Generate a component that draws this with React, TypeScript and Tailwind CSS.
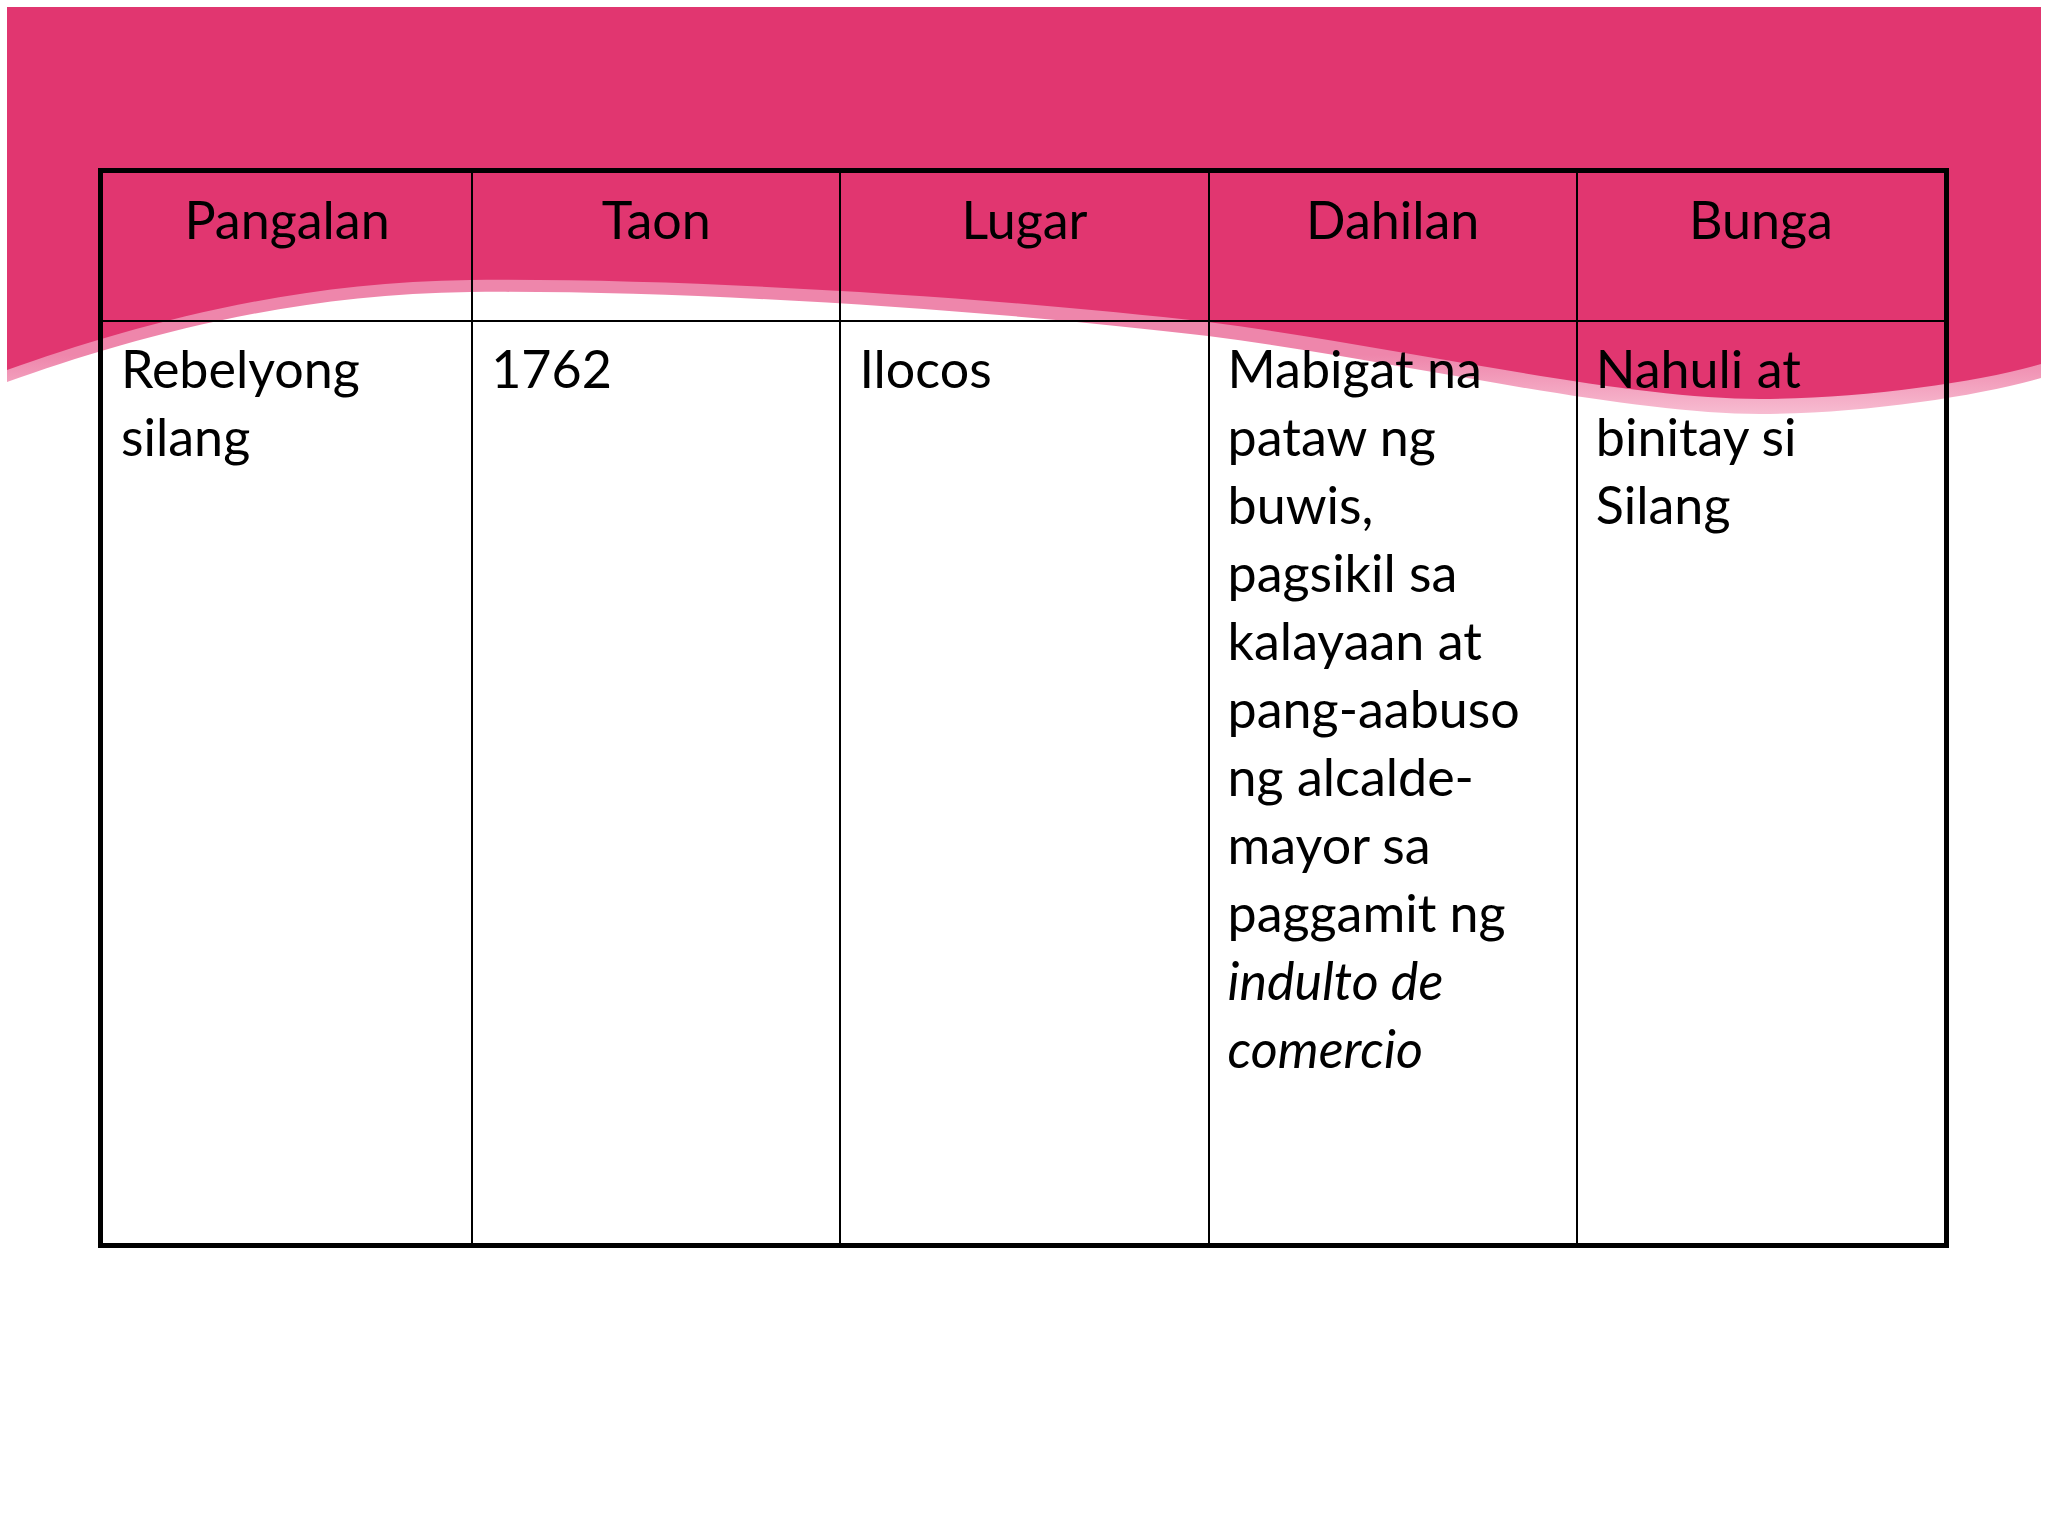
import React from "react";

const headers = ["Pangalan", "Taon", "Lugar", "Dahilan", "Bunga"];

const dahilan = [
  "Mabigat na",
  "pataw ng",
  "buwis,",
  "pagsikil sa",
  "kalayaan at",
  "pang-aabuso",
  "ng alcalde-",
  "mayor sa",
  "paggamit ng",
];

function Wave() {
  return (
    <svg className="absolute inset-0" width="2048" height="1536" viewBox="0 0 2048 1536">
      <defs>
        <linearGradient id="strip" x1="0" y1="0" x2="0" y2="1">
          <stop offset="0.85" stopColor="#ee86ab" />
          <stop offset="1" stopColor="#f7bcd1" />
        </linearGradient>
      </defs>
      <path
        d="M7,20 L2041,20 L2041,378 C1980,396 1860,414 1760,414 C1620,414 1400,361 1208,336 C1000,311 700,290 470,292 C280,294 120,342 7,382 Z"
        fill="url(#strip)"
      />
      <path
        d="M7,7 L2041,7 L2041,364 C1980,382 1860,399 1760,399 C1620,399 1400,347 1208,322 C1000,298 700,278 470,280 C280,282 120,330 7,370 Z"
        fill="#e13670"
      />
    </svg>
  );
}

export default function App() {
  return (
    <div className="relative w-[2048px] h-[1536px] overflow-hidden bg-white font-['Lato','Liberation_Sans',sans-serif] text-black">
      <Wave />
      <div className="relative pt-[168px] pl-[98px]">
        <div className="grid h-[1080px] w-[1851px] grid-cols-5 grid-rows-[149px_1fr] border-[5px] border-black text-[52px] leading-[68px]">
          {headers.map((h, i) => (
            <div
              key={h}
              className={`border-b-2 border-black pt-[12px] text-center ${i > 0 ? "border-l-2" : ""}`}
            >
              {h}
            </div>
          ))}

          <div className="px-[18px] pt-[12px]">
            Rebelyong
            <br />
            silang
          </div>
          <div className="border-l-2 border-black px-[18px] pt-[12px]">1762</div>
          <div className="border-l-2 border-black px-[18px] pt-[12px]">Ilocos</div>
          <div className="border-l-2 border-black px-[18px] pt-[12px]">
            {dahilan.map((line) => (
              <div key={line} className="whitespace-nowrap">
                {line}
              </div>
            ))}
            <div className="italic">indulto de</div>
            <div className="italic">comercio</div>
          </div>
          <div className="border-l-2 border-black px-[18px] pt-[12px]">
            Nahuli at
            <br />
            binitay si
            <br />
            Silang
          </div>
        </div>
      </div>
    </div>
  );
}
